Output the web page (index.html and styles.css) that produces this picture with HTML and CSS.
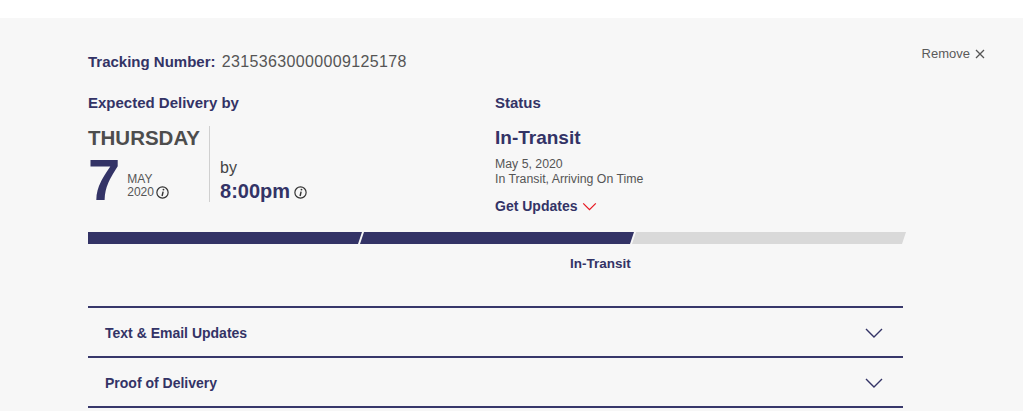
FILE: index.html
```html
<!DOCTYPE html>
<html lang="en">
<head>
<meta charset="utf-8">
<title>Tracking</title>
<link rel="stylesheet" href="styles.css">
</head>
<body>
<div class="panel">
  <div class="top">
    <div class="tracking">Tracking Number: <span class="num">23153630000009125178</span></div>
    <div class="remove">Remove
      <svg class="x" viewBox="0 0 10 10" width="10" height="10"><path d="M1 1L9 9M9 1L1 9" stroke="#555" stroke-width="1.3" fill="none"/></svg>
    </div>
  </div>

  <div class="details">
    <div class="col-left">
      <div class="label">Expected Delivery by</div>
      <div class="date-row">
        <div class="date-left">
          <div class="day">THURSDAY</div>
          <div class="daynum-row">
            <div class="daynum">7</div>
            <div class="monthyear">
              <div>MAY</div>
              <div class="yr">2020 <svg class="info" viewBox="0 0 12 12" width="13" height="13"><circle cx="6" cy="6" r="5.2" stroke="#333" stroke-width="1.1" fill="none"/><path d="M6.6 5.2L5.6 9.2" stroke="#333" stroke-width="1.3" fill="none"/><circle cx="6.9" cy="3.3" r="0.85" fill="#333"/></svg></div>
            </div>
          </div>
        </div>
        <div class="time">
          <div class="by">by</div>
          <div class="hour">8:00pm <svg class="info" viewBox="0 0 12 12" width="13" height="13"><circle cx="6" cy="6" r="5.2" stroke="#333" stroke-width="1.1" fill="none"/><path d="M6.6 5.2L5.6 9.2" stroke="#333" stroke-width="1.3" fill="none"/><circle cx="6.9" cy="3.3" r="0.85" fill="#333"/></svg></div>
        </div>
      </div>
    </div>
    <div class="col-right">
      <div class="label">Status</div>
      <div class="status">In-Transit</div>
      <div class="small first">May 5, 2020</div>
      <div class="small">In Transit, Arriving On Time</div>
      <div class="updates">Get Updates <svg class="chev-red" viewBox="0 0 16 10" width="15" height="9"><path d="M1 1.5L8 8.5L15 1.5" stroke="#e71921" stroke-width="1.4" fill="none"/></svg></div>
    </div>
  </div>

  <div class="progress">
    <div class="seg seg-first done"></div>
    <div class="seg done"></div>
    <div class="seg"></div>
  </div>
  <div class="progress-labels">
    <div class="pl"></div>
    <div class="pl pl-active">In-Transit</div>
    <div class="pl"></div>
  </div>

  <div class="accordion">
    <div class="acc-item">
      <span class="acc-title">Text &amp; Email Updates</span>
      <svg class="chev" viewBox="0 0 18 10" width="18" height="10"><path d="M1 1L9 9L17 1" stroke="#333366" stroke-width="1.4" fill="none"/></svg>
    </div>
    <div class="acc-item">
      <span class="acc-title">Proof of Delivery</span>
      <svg class="chev" viewBox="0 0 18 10" width="18" height="10"><path d="M1 1L9 9L17 1" stroke="#333366" stroke-width="1.4" fill="none"/></svg>
    </div>
    <div class="acc-end"></div>
  </div>
</div>
</body>
</html>
```

FILE: styles.css
```css
html, body {
  margin: 0;
  padding: 0;
  background: #ffffff;
  font-family: "Liberation Sans", Arial, Helvetica, sans-serif;
  overflow: hidden;
}

.panel {
  background: #f7f7f7;
  margin-top: 18px;
  padding: 28px 38px 0 88px;
  height: 393px;
  box-sizing: border-box;
  overflow: hidden;
}

.top {
  display: flex;
  justify-content: space-between;
  align-items: flex-start;
}

.tracking {
  margin-top: 7px;
  font-size: 15px;
  line-height: 17px;
  font-weight: bold;
  color: #333366;
}

.tracking .num {
  font-weight: normal;
  font-size: 16px;
  letter-spacing: 0.35px;
  margin-left: 2px;
  color: #555555;
}

.remove {
  font-size: 13px;
  line-height: 16px;
  color: #5a5a5a;
  display: flex;
  align-items: center;
  gap: 5px;
}

.details {
  display: flex;
  margin-top: 24px;
}

.col-left {
  width: 407px;
}

.label {
  font-size: 15px;
  line-height: 17px;
  font-weight: bold;
  color: #333366;
}

.date-row {
  display: flex;
  margin-top: 15px;
}

.date-left {
  border-right: 1px solid #d0d0d0;
  padding-right: 9px;
}

.day {
  font-size: 20.5px;
  line-height: 24px;
  font-weight: bold;
  color: #4d4d4d;
}

.daynum-row {
  display: flex;
  align-items: flex-end;
  margin-top: 8px;
}

.daynum {
  font-size: 58px;
  line-height: 44px;
  font-weight: bold;
  color: #333366;
}

.monthyear {
  margin-left: 7px;
  margin-bottom: 3px;
  font-size: 12px;
  line-height: 13px;
  color: #555555;
}

.yr {
  display: flex;
  align-items: center;
  gap: 2px;
}

.info {
  display: block;
}

.time {
  padding-left: 10px;
  display: flex;
  flex-direction: column;
  justify-content: flex-end;
}

.by {
  font-size: 16px;
  line-height: 18px;
  color: #444444;
  margin-bottom: 3px;
}

.hour {
  font-size: 20px;
  line-height: 22px;
  font-weight: bold;
  color: #333366;
  display: flex;
  align-items: center;
  gap: 4px;
}

.hour .info {
  margin-top: 2px;
}

.col-right {
  flex: 1;
}

.status {
  margin-top: 15px;
  font-size: 19px;
  line-height: 24px;
  font-weight: bold;
  color: #333366;
}

.small {
  font-size: 12.3px;
  line-height: 15px;
  color: #555555;
}

.small.first {
  margin-top: 7px;
}

.updates {
  margin-top: 11px;
  font-size: 14px;
  line-height: 16px;
  font-weight: bold;
  color: #333366;
  display: flex;
  align-items: center;
  gap: 5px;
}

.progress {
  display: flex;
  width: 818px;
  height: 12px;
  margin-top: 18px;
}

.seg {
  flex: 1;
  margin-left: -2px;
  background: #d9d9d9;
  clip-path: polygon(4px 0, 100% 0, calc(100% - 4px) 100%, 0 100%);
}

.seg.done {
  background: #333366;
}

.seg-first {
  margin-left: 0;
  clip-path: polygon(0 0, 100% 0, calc(100% - 4px) 100%, 0 100%);
}

.progress-labels {
  display: flex;
  width: 818px;
  margin-top: 12px;
}

.pl {
  flex: 1;
  font-size: 13.5px;
  line-height: 15px;
  font-weight: bold;
  color: #333366;
}

.pl-active {
  text-align: right;
  padding-right: 4px;
}

.accordion {
  width: 815px;
  margin-top: 35px;
}

.acc-item {
  border-top: 2px solid #38386b;
  height: 48px;
  display: flex;
  align-items: center;
  justify-content: space-between;
  padding: 1px 20px 0 17px;
  box-sizing: border-box;
  height: 50px;
}

.acc-title {
  font-size: 14px;
  font-weight: bold;
  color: #333366;
}

.chev {
  display: block;
}

.acc-end {
  border-top: 2px solid #38386b;
}
```
